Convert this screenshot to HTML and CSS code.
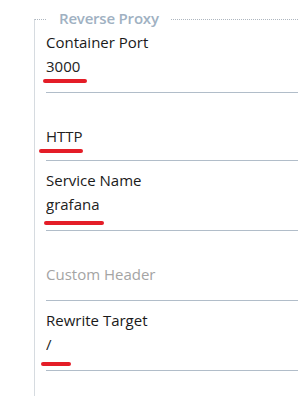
FILE: index.html
```html
<!DOCTYPE html>
<html lang="en">
<head>
    <meta charset="UTF-8">
    <meta name="viewport" content="width=device-width, initial-scale=1.0">

    <!-- Title -->
    <title>Reverse Proxy</title>

    <!-- CSS styles -->
    <link rel="stylesheet" href="styles.css">
</head>
<body>
    <!-- Reverse proxy settings -->
    <form class="proxy">
        <h3 class="proxy-title">Reverse Proxy</h3>

        <!-- Container port -->
        <div class="field">
            <label for="port">Container Port</label>
            <input type="text" id="port" name="port" value="3000">
            <span class="mark mark-port"></span>
        </div>

        <!-- Protocol -->
        <div class="field field-nolabel field-short">
            <select id="protocol" name="protocol">
                <option>HTTP</option>
                <option>HTTPS</option>
            </select>
            <span class="mark mark-protocol"></span>
        </div>

        <!-- Service name -->
        <div class="field">
            <label for="service">Service Name</label>
            <input type="text" id="service" name="service" value="grafana">
            <span class="mark mark-service"></span>
        </div>

        <!-- Custom header -->
        <div class="field field-nolabel">
            <input type="text" id="header" name="header" placeholder="Custom Header">
        </div>

        <!-- Rewrite target -->
        <div class="field">
            <label for="rewrite">Rewrite Target</label>
            <input type="text" id="rewrite" name="rewrite" value="/">
            <span class="mark mark-rewrite"></span>
        </div>
    </form>
</body>
</html>
```

FILE: styles.css
```css
body {
    font-family: 'Open Sans', 'Noto Sans', sans-serif;
    background-color: #fff;
    margin: 0;
    padding: 0;
}

.proxy {
    margin: 19px 0 0 34px;
    padding: 0 0 30px 11px;
    border-top: 1px dotted #aeb6bf;
    border-left: 1px solid #d6dbe0;
}

.proxy-title {
    width: fit-content;
    margin: -12px 0 -5px 1px;
    padding: 0 12px;
    background-color: #fff;
    color: #a0b1c2;
    font-size: 15px;
    font-weight: 600;
    line-height: 20px;
    letter-spacing: -0.2px;
}

.field {
    position: relative;
    padding: 8px 0 14px;
    border-bottom: 1px solid #b1bdc9;
}

.field-nolabel {
    padding-top: 31px;
}

.field-short {
    padding-bottom: 12px;
}

label {
    display: block;
    color: #1a1a1a;
    font-size: 15px;
    line-height: 23px;
}

input[type="text"],
select {
    display: block;
    width: 100%;
    height: 24px;
    margin: 0;
    padding: 0;
    border: none;
    background: none;
    color: #222;
    font-family: inherit;
    font-size: 15px;
    line-height: 24px;
    outline: none;
    appearance: none;
    box-sizing: border-box;
}

input::placeholder {
    color: #a4a4a4;
}

/* red marker strokes drawn over the values */
.mark {
    position: absolute;
    height: 4px;
    border-radius: 2px;
    background-color: #e41d27;
}

.mark-port {
    top: 56px;
    left: -3px;
    width: 44px;
}

.mark-protocol {
    top: 56px;
    left: -7px;
    width: 44px;
}

.mark-service {
    top: 60px;
    left: -2px;
    width: 60px;
}

.mark-rewrite {
    top: 61px;
    left: -5px;
    width: 30px;
}
```
